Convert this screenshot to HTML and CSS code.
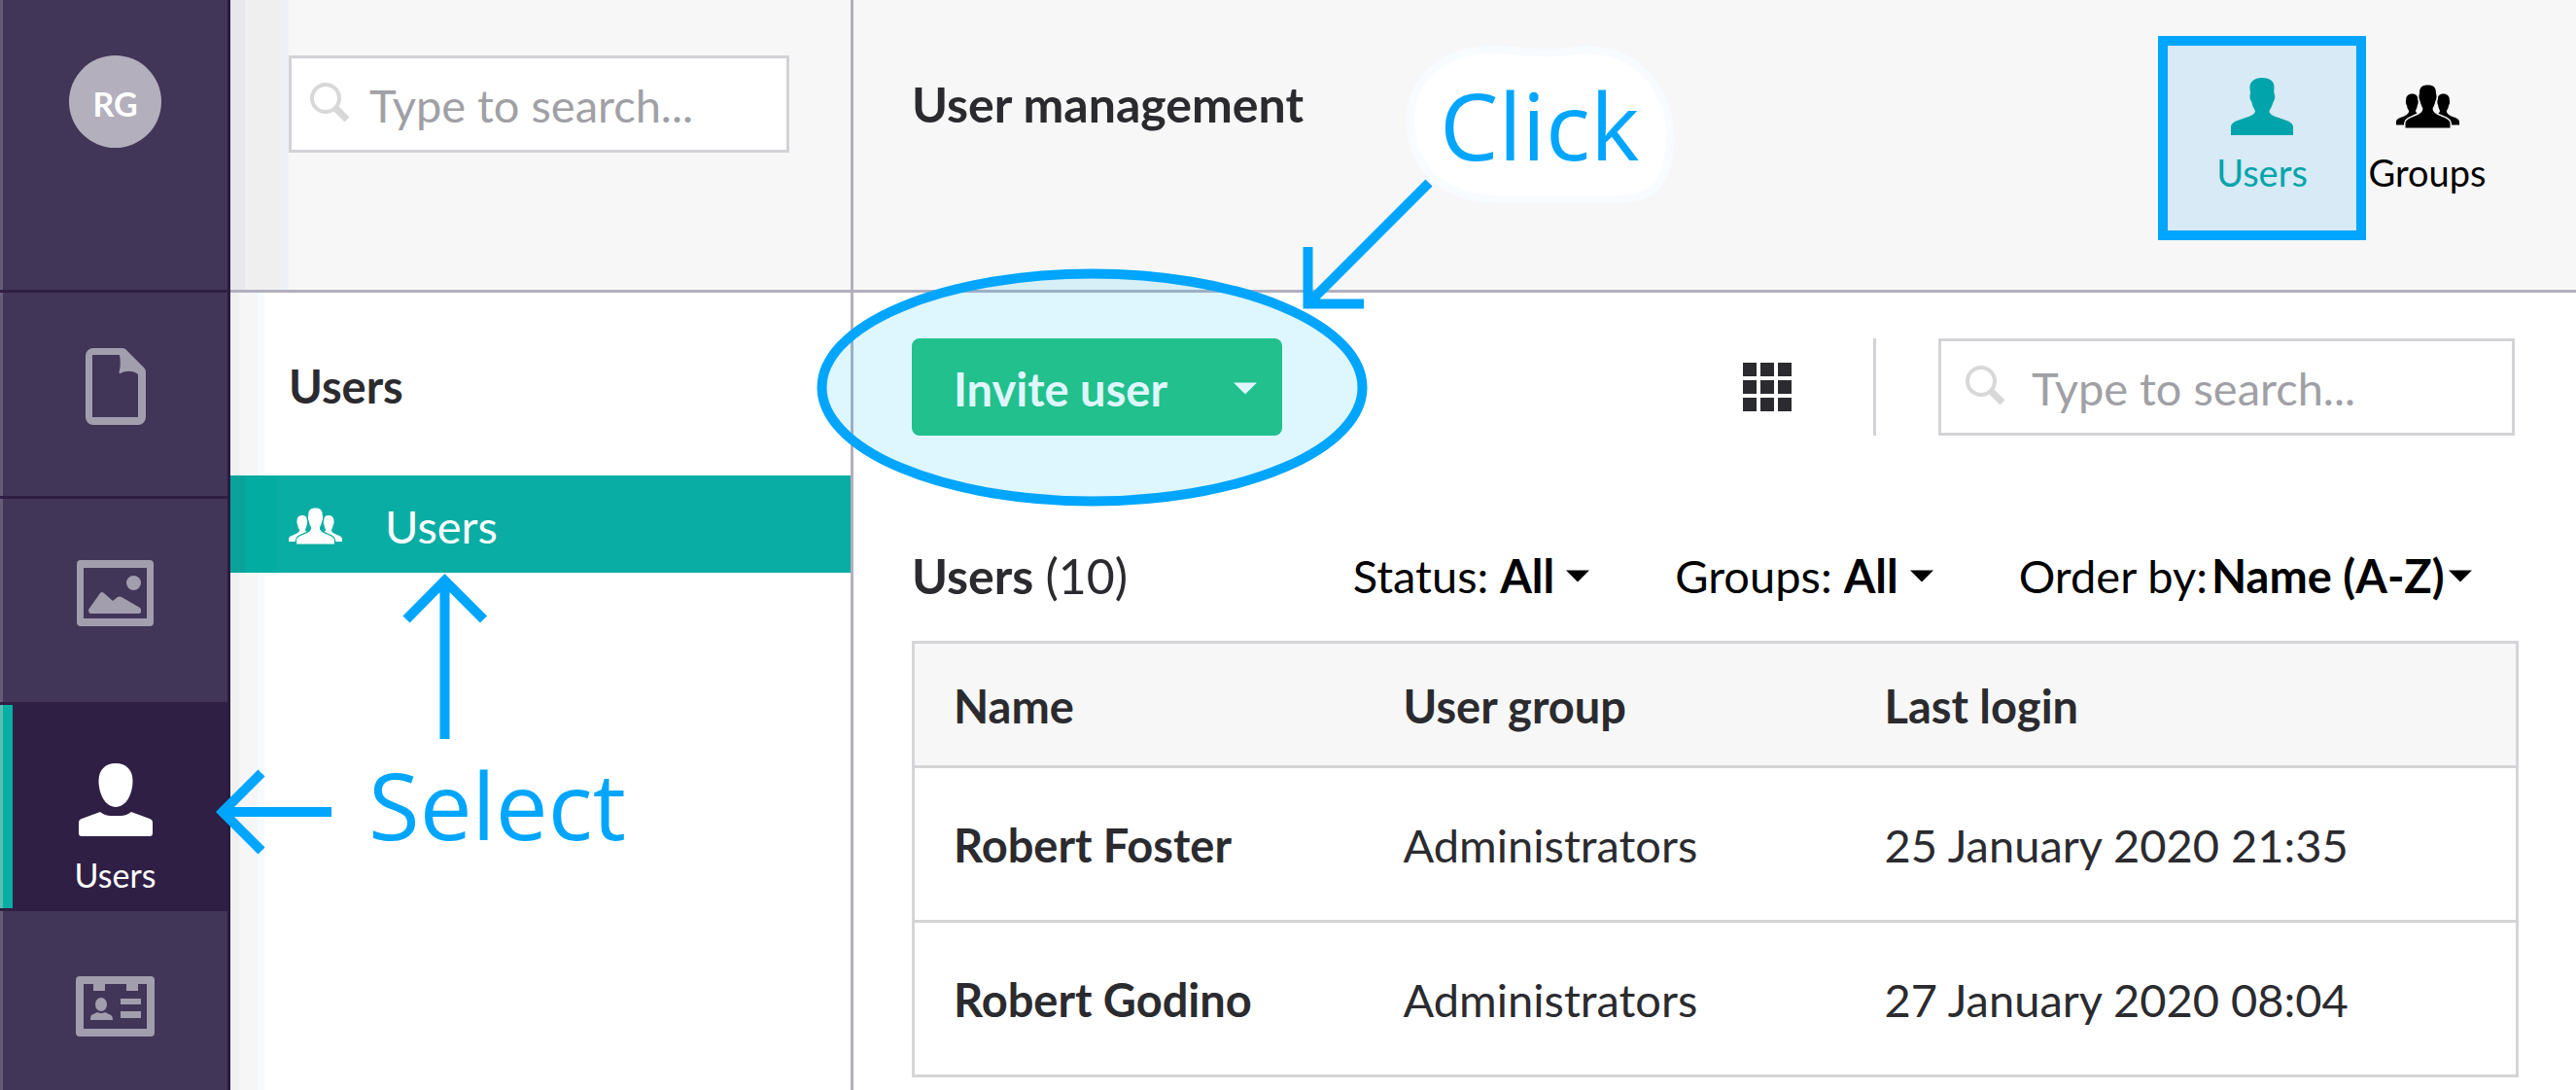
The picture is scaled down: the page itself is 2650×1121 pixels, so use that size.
FILE: index.html
```html
<!DOCTYPE html>
<html lang="en">
<head>
<meta charset="utf-8">
<title>User management</title>
<link rel="stylesheet" href="styles.css">
</head>
<body>
<svg class="sprite" aria-hidden="true">
  <symbol id="i-group" viewBox="0 0 65 45">
    <path d="M16.500 9.500C20.500 9.500 22.500 12 22.500 15.500C23 18 22.500 20 21.800 21.500C21.500 24 20.500 25.500 20 27C20.500 30 24 31 28 33V41.500H0V38.500C0 35.500 3 34.500 7 33C10.500 31.500 13 30 13.200 27C12 25.500 11.400 24 11 21.500C10 20 9.500 18 10.200 15.500C10 12 12.500 9.500 16.500 9.500Z"/>
    <path d="M48.500 9.500C44.500 9.500 42.500 12 42.500 15.500C42 18 42.500 20 43.200 21.500C43.500 24 44.500 25.500 45 27C44.500 30 41 31 37 33V41.500H65V38.500C65 35.500 62 34.500 58 33C54.500 31.500 52 30 51.800 27C53 25.500 53.600 24 54 21.500C55 20 55.500 18 54.800 15.500C55 12 52.500 9.500 48.500 9.500Z"/>
    <path class="cutout" d="M32.500 0.500C38.500 0.500 41.200 3 41 9C42 12 41.600 15 40.400 17C39.800 20.500 38.500 22.500 37.600 24.500C37.600 28 40 29.800 45 32C51 34.600 55.500 36 55.500 40V44.500H9.500V40C9.500 36 14 34.600 20 32C25 29.800 27.400 28 27.400 24.500C26.500 22.500 25.200 20.500 24.600 17C23.400 15 23 12 24 9C23.800 3 26.500 0.500 32.500 0.500Z"/>
  </symbol>
  <symbol id="i-search" viewBox="0 0 41 41">
    <circle cx="16" cy="16" r="14" fill="none" stroke="currentColor" stroke-width="4"/>
    <path d="M26 26L38 38" stroke="currentColor" stroke-width="7"/>
  </symbol>
  <symbol id="i-caret" viewBox="0 0 24 12"><path d="M0 0H24L12 12Z"/></symbol>
</svg>

<div class="app">
  <nav class="sidebar" aria-label="Sections">
    <div class="sidebar-top"><span class="avatar">RG</span></div>
    <a class="section" href="#" aria-label="Content">
      <svg width="62" height="79" viewBox="0 0 62 79"><path fill-rule="evenodd" d="M8 0H38C40 0 41 1 42 2L60 20C61.500 21.500 62 23 62 25V71A8 8 0 0 1 54 79H8A8 8 0 0 1 0 71V8A8 8 0 0 1 8 0ZM7 7V71H54V27C49 23 41 23 36 26C34 26 34 25 35 23C36 18 36 13 35 7Z"/></svg>
    </a>
    <a class="section" href="#" aria-label="Media">
      <svg width="79" height="68" viewBox="0 0 79 68"><path fill-rule="evenodd" d="M4 0H75A4 4 0 0 1 79 4V64A4 4 0 0 1 75 68H4A4 4 0 0 1 0 64V4A4 4 0 0 1 4 0ZM7 8V60H72V8Z"/><circle cx="58.500" cy="23.500" r="7.500"/><path d="M12 51L24 34Q26 32 28 34L37 42L42 38Q44 37 46 38L65 49Q67 51 66 54L64 55H14Q12 54 12 51Z"/></svg>
    </a>
    <a class="section section-active" href="#">
      <svg width="76" height="75" viewBox="0 0 76 75"><path d="M38 0C49 0 55.500 7 55.500 18C55.500 31 49 45 38 45C27 45 20.500 31 20.500 18C20.500 7 27 0 38 0Z"/><path d="M22 50Q27 54 33 54H43Q49 54 54 50L73 57Q76 58 76 61V72Q76 75 73 75H3Q0 75 0 72V61Q0 58 3 57Z"/></svg>
      <span>Users</span>
    </a>
    <a class="section section-last" href="#" aria-label="Members">
      <svg width="81" height="62" viewBox="0 0 81 62"><path fill-rule="evenodd" d="M4 0H77A4 4 0 0 1 81 4V58A4 4 0 0 1 77 62H4A4 4 0 0 1 0 58V4A4 4 0 0 1 4 0ZM8 8V54H73V8H64V15H52V8H30V15H18V8Z"/><ellipse cx="26" cy="29" rx="6" ry="7"/><path d="M22 37Q26 39 30 37L36 40Q38 41 38 45H15Q15 41 16 40Z"/><path d="M46 23H67V29H46ZM46 36H67V43H46Z"/></svg>
    </a>
  </nav>

  <aside class="panel">
    <div class="panel-top">
      <label class="search">
        <svg width="41" height="41" aria-hidden="true"><use href="#i-search"/></svg>
        <input type="search" placeholder="Type to search..." aria-label="Search sections">
      </label>
    </div>
    <h2 class="panel-title">Users</h2>
    <a class="tree-item" href="#">
      <svg width="55" height="38" aria-hidden="true"><use href="#i-group"/></svg>
      Users
    </a>
    <svg class="note note-select" width="435" height="300" viewBox="215 585 435 300">
      <path d="M457.500 760V597M418 637L457.500 597L497.500 637"/>
      <path d="M341 835H229M269 795L229 835L269 875"/>
      <text x="379" y="864">Select</text>
    </svg>
  </aside>

  <main class="main">
    <header class="main-top">
      <h1>User management</h1>
      <nav class="tabs" aria-label="Views">
        <a class="tab tab-active" href="#">
          <svg width="64" height="59" viewBox="0 0 64 59"><path d="M32 0C41 0 45 4 44.500 11C44.500 13 44 14 44.500 16C46 19 45 23 43.500 25C42.500 29 41 31 39.500 34C39.500 37 42 38.500 46 40L56 43.500C62 45.500 64 48 64 51V59H0V51C0 48 2 45.500 8 43.500L18 40C22 38.500 25 37 25 34C23.500 31 22 29 21.500 25C19.500 23 19 19 20 16C20 14 19.500 13 19.500 11C19 4 24 0 32 0Z"/></svg>
          <span>Users</span>
        </a>
        <a class="tab" href="#">
          <svg width="65" height="45"><use href="#i-group"/></svg>
          <span>Groups</span>
        </a>
      </nav>
    </header>

    <div class="content">
      <div class="toolbar">
        <div class="invite">
          <button class="button" type="button">Invite user
            <svg width="24" height="13"><use href="#i-caret"/></svg>
          </button>
          <svg class="note note-click" width="890" height="480" viewBox="840 45 890 480">
            <ellipse cx="1123.500" cy="398.500" rx="278" ry="117"/>
            <path d="M1470 188L1346 312M1345.500 254V312.500H1403"/>
            <path class="halo" d="M1451 125C1450 85 1480 52 1535 51C1570 51 1580 58 1620 52C1680 45 1718 90 1718 140C1718 190 1700 205 1660 205H1540C1480 203 1452 170 1451 125Z"/>
            <text x="1481" y="165">Click</text>
          </svg>
        </div>
        <button class="view" type="button" aria-label="Grid view">
          <svg width="50" height="50" viewBox="0 0 50 50"><path d="M0 0H14V14H0ZM18 0H32V14H18ZM36 0H50V14H36ZM0 18H14V32H0ZM18 18H32V32H18ZM36 18H50V32H36ZM0 36H14V50H0ZM18 36H32V50H18ZM36 36H50V50H36Z"/></svg>
        </button>
        <span class="separator"></span>
        <label class="search search-users">
          <svg width="41" height="41" aria-hidden="true"><use href="#i-search"/></svg>
          <input type="search" placeholder="Type to search..." aria-label="Search users">
        </label>
      </div>

      <div class="list-bar">
        <h2>Users <span>(10)</span></h2>
        <div class="filter">
          <label for="status">Status:</label>
          <select id="status"><option>All</option></select>
          <svg width="24" height="13"><use href="#i-caret"/></svg>
        </div>
        <div class="filter">
          <label for="groups">Groups:</label>
          <select id="groups"><option>All</option></select>
          <svg width="24" height="13"><use href="#i-caret"/></svg>
        </div>
        <div class="filter filter-tight">
          <label for="order">Order by:</label>
          <select id="order"><option>Name (A-Z)</option></select>
          <svg width="24" height="13"><use href="#i-caret"/></svg>
        </div>
      </div>

      <table class="users">
        <thead>
          <tr><th class="col-name">Name</th><th class="col-group">User group</th><th>Last login</th></tr>
        </thead>
        <tbody>
          <tr><td class="name">Robert Foster</td><td>Administrators</td><td>25 January 2020 21:35</td></tr>
          <tr><td class="name">Robert Godino</td><td>Administrators</td><td>27 January 2020 08:04</td></tr>
        </tbody>
      </table>
    </div>
  </main>
</div>
</body>
</html>
```
FILE: styles.css
```css
* { box-sizing: border-box; }

body {
  margin: 0;
  font: 47px/60px Lato, "Liberation Sans", sans-serif;
  color: #2b2b2f;
  background: #fff;
}

h1, h2 { margin: 0; font-size: 50px; font-weight: 700; }
a { color: inherit; text-decoration: none; }
svg { display: block; flex: none; fill: currentColor; }
button, input, select { font: inherit; color: inherit; border: 0; padding: 0; background: none; }

.sprite { position: absolute; width: 0; height: 0; }
.cutout { stroke: var(--icon-bg); stroke-width: 3px; paint-order: stroke; }

.app { display: flex; min-height: 100vh; }

/* Section bar */
.sidebar {
  flex: none;
  width: 237px;
  color: #a39eae;
  background: linear-gradient(90deg, #665c7a 3px, #413558 3px);
  border-right: 3px solid #2a1c41;
}
.sidebar-top {
  height: 301px;
  padding: 57px 0 0 3px;
  border-bottom: 3px solid #301f44;
}
.avatar {
  display: block;
  width: 95px;
  height: 95px;
  margin: 0 auto;
  border-radius: 50%;
  font-size: 34px;
  font-weight: 700;
  line-height: 99px;
  text-align: center;
  color: #fff;
  background: #b3afbd;
}
.section {
  display: flex;
  flex-direction: column;
  align-items: center;
  justify-content: center;
  height: 212px;
  padding: 0 0 16px 3px;
  border-bottom: 3px solid #301f44;
}
.section span { font-size: 34px; line-height: 40px; }
.section-active {
  justify-content: flex-start;
  gap: 20px;
  padding: 60px 0 0 3px;
  color: #fff;
  background: linear-gradient(90deg, #5bbdb6 3px, #08aea4 3px, #08aea4 13px, #301f44 13px);
}
.section-last { height: 184px; padding: 12px 0 0 3px; border-bottom: 0; }

/* Tree panel */
.panel {
  position: relative;
  flex: none;
  width: 641px;
  border-right: 3px solid #b3afbd;
  background: linear-gradient(90deg, #f0f0f0 9px, #f6f6f7 9px, #f6f6f7 28px, #f6fbff 28px, #f6fbff 35px, #fff 35px);
}
.panel-top {
  height: 301px;
  padding: 57px 63px 0 60px;
  border-bottom: 3px solid #b3afbd;
  background: linear-gradient(90deg, #e7e7ec 15px, #efefef 15px, #efefef 50px, #edf1f6 50px, #edf1f6 60px, #f7f7f7 60px);
}
.panel-title {
  padding: 66px 60px 62px;
  font-size: 47px;
}
.tree-item {
  --icon-bg: #08aea4;
  display: flex;
  align-items: center;
  gap: 44px;
  height: 100px;
  padding: 4px 60px 0;
  color: #fff;
  background: linear-gradient(90deg, #0aa39c 15px, #02aca0 15px, #02aca0 48px, #0aada4 48px);
}

.search {
  display: flex;
  align-items: center;
  gap: 20px;
  height: 100px;
  padding: 2px 19px 0;
  border: 3px solid #d3d3d7;
  background: #fff;
  color: #d8d8d9;
}
.search svg { margin-bottom: 6px; }
.search input { flex: 1; min-width: 0; height: 60px; color: #2b2b2f; appearance: none; outline: 0; }
.search input::placeholder { color: #a0a0a5; opacity: 1; }

/* Main area */
.main { flex: 1; min-width: 0; }
.main-top {
  display: flex;
  justify-content: space-between;
  height: 301px;
  padding: 37px 90px 0 60px;
  border-bottom: 3px solid #b3afbd;
  background: #f7f7f7;
}
.main-top h1 { padding-top: 40px; }
.tabs { display: flex; }
.tab {
  --icon-bg: #f7f7f7;
  position: relative;
  display: flex;
  flex-direction: column;
  align-items: center;
  width: 126px;
  height: 210px;
  padding-top: 50px;
  gap: 23px;
  color: #000;
}
.tab span { font-size: 38px; line-height: 44px; }
.tab-active { width: 214px; padding-top: 43px; gap: 16px; color: #00a7a0; }
.tab-active::after {
  content: "";
  position: absolute;
  inset: 0;
  border: 10px solid #00a5fd;
  background: rgba(0, 150, 240, .13);
}

.content { padding: 47px 59px 0 60px; }
.toolbar { display: flex; align-items: center; padding-right: 4px; }
.invite { position: relative; margin-right: auto; }
.button {
  display: flex;
  align-items: center;
  justify-content: space-between;
  width: 381px;
  height: 100px;
  padding: 3px 26px 0 43px;
  border-radius: 8px;
  font-weight: 700;
  color: #fff;
  background: #26c17d;
}
.view { color: #2b2b2f; }
.separator { width: 3px; height: 100px; margin: 0 64px 0 84px; background: #d3d3d7; }
.search-users { width: 593px; padding: 2px 25px 0; gap: 27px; }

.list-bar {
  display: flex;
  align-items: center;
  gap: 88px;
  padding: 114px 48px 37px 0;
}
.list-bar h2 { margin-right: auto; }
.list-bar h2 span { font-weight: 400; }
.filter { display: flex; align-items: center; gap: 12px; color: #000; }
.filter select { appearance: none; height: 60px; font-weight: 700; }
.filter-tight { gap: 4px; }

.users {
  width: 100%;
  border: 3px solid #d5d5d8;
  border-collapse: collapse;
}
.users th, .users td {
  height: 159px;
  padding: 2px 0 0 42px;
  text-align: left;
  font-weight: 400;
  border-bottom: 3px solid #d5d5d8;
}
.users th { height: 128px; font-weight: 700; background: #f7f7f7; }
.users .name { font-weight: 700; }
.users .name, .users .col-name { padding-left: 40px; }
.col-name { width: 28%; }
.col-group { width: 30%; }

/* Tutorial notes drawn over the interface */
.note {
  position: absolute;
  z-index: 2;
  overflow: visible;
  pointer-events: none;
  fill: none;
  stroke: #00a5fd;
  stroke-width: 10px;
}
.note text {
  font: 96px "Open Sans", "Noto Sans", sans-serif;
  fill: #00a5fd;
  stroke: none;
}
.note ellipse { fill: rgba(0, 186, 247, .13); }
.note .halo { fill: #fff; stroke: #f8fbff; stroke-width: 8px; }
.note-select { left: -22px; top: 585px; }
.note-click { left: -98px; top: -303px; }
```
